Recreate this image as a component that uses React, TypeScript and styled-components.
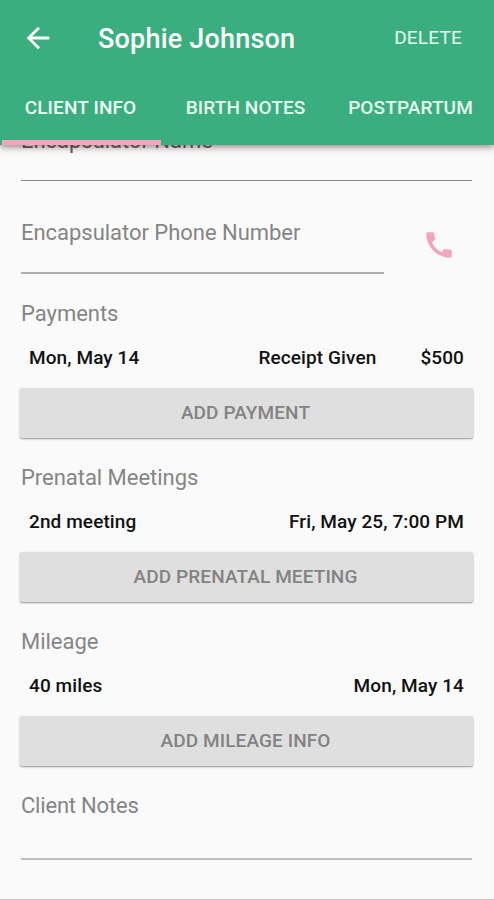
import React from "react";
import styled, { createGlobalStyle } from "styled-components";
import { MdArrowBack, MdCall } from "react-icons/md";

const GlobalStyle = createGlobalStyle`
  * { box-sizing: border-box; }
  body {
    margin: 0;
    background: #fafafa;
    font-family: Roboto, "Noto Sans", sans-serif;
  }
`;

const Screen = styled.div`
  display: flex;
  flex-direction: column;
  width: 494px;
  height: 900px;
  overflow: hidden;
  background: #fafafa;
  border-bottom: 1px solid #c4c4c4;
`;

const Header = styled.header`
  position: relative;
  z-index: 1;
  flex: none;
  height: 145px;
  background: #3aae7f;
  color: #fff;
  box-shadow: 0 2px 7px rgba(60, 30, 30, 0.55);
`;

const Toolbar = styled.div`
  display: flex;
  align-items: center;
  height: 76px;
  padding: 0 32px 0 21px;
`;

const BackButton = styled.button`
  display: flex;
  padding: 0 0 1px;
  margin-right: 43px;
  border: 0;
  background: none;
  color: inherit;
`;

const Title = styled.h1`
  flex: 1;
  margin: 0;
  padding-top: 2px;
  font-size: 27px;
  font-weight: 500;
  letter-spacing: 0.2px;
  white-space: nowrap;
`;

const DeleteButton = styled.button`
  padding: 0 0 2px;
  border: 0;
  background: none;
  color: #e6fbf1;
  font: 400 19px Roboto, sans-serif;
  letter-spacing: 0.2px;
`;

const Tabs = styled.nav`
  display: grid;
  grid-template-columns: 160px 171px 159px;
  height: 69px;
`;

const Tab = styled.button<{ $active?: boolean }>`
  padding: ${(p) => (p.$active ? "0 0 1px 1px" : "0 0 1px")};
  margin: ${(p) => (p.$active ? "0 -1px 0 2px" : "0")};
  border: 0;
  border-bottom: 5px solid ${(p) => (p.$active ? "#f5a6bd" : "transparent")};
  background: none;
  color: ${(p) => (p.$active ? "#f0fff8" : "#e6fbf1")};
  font: 500 19px Roboto, sans-serif;
  letter-spacing: 0.12px;
  text-indent: ${(p) => (p.$active ? "-3px" : "0")};
  white-space: nowrap;
`;

const Content = styled.main`
  display: flex;
  flex-direction: column;
  margin-top: -17px;
  padding: 0 22px 0 21px;
`;

const Label = styled.div<{ $dark?: boolean }>`
  height: 26px;
  font-size: 22px;
  line-height: 26px;
  letter-spacing: -0.03px;
  color: ${(p) => (p.$dark ? "#5c5c5c" : "#858585")};
`;

const Field = styled.div<{ $height: number; $line: string; $thick?: boolean }>`
  flex: 1;
  height: ${(p) => p.$height}px;
  border-bottom: ${(p) => (p.$thick ? 2 : 1)}px solid ${(p) => p.$line};
`;

const NameRow = styled.div`
  display: flex;
  margin-bottom: 39px;
`;

const PhoneRow = styled.div`
  display: flex;
  margin-bottom: 27px;
`;

const CallButton = styled.button`
  display: flex;
  width: 88px;
  padding: 8px 0 0 38px;
  border: 0;
  background: none;
  color: #f0a5bb;
`;

const Section = styled.section`
  display: flex;
  flex-direction: column;
  height: 164px;
`;

const Entry = styled.div`
  display: flex;
  margin: 20px 8px 19px;
  font-size: 19px;
  font-weight: 500;
  line-height: 22px;
  letter-spacing: 0.1px;
  color: #111;
`;

const Lead = styled.span`
  flex: 1;
`;

const Amount = styled.span`
  margin-left: 44px;
`;

const AddButton = styled.button`
  height: 50px;
  margin: 0 -1px;
  padding: 0 2px 2px 0;
  border: 0;
  border-radius: 2px;
  background: #dfdfdf;
  color: #838383;
  font: 500 19px Roboto, sans-serif;
  letter-spacing: 0.1px;
  box-shadow: 0 1px 2px rgba(0, 0, 0, 0.4);
`;

const NotesRow = styled.div`
  display: flex;
`;

const NotesLabel = styled(Label)`
  letter-spacing: -0.2px;
`;

export default function App() {
  return (
    <>
      <GlobalStyle />
      <Screen>
        <Header>
          <Toolbar>
            <BackButton aria-label="Back">
              <MdArrowBack size={34} />
            </BackButton>
            <Title>Sophie Johnson</Title>
            <DeleteButton>DELETE</DeleteButton>
          </Toolbar>
          <Tabs>
            <Tab $active>CLIENT INFO</Tab>
            <Tab>BIRTH NOTES</Tab>
            <Tab>POSTPARTUM</Tab>
          </Tabs>
        </Header>
        <Content>
          <NameRow>
            <Field $height={53} $line="#858585">
              <Label $dark>Encapsulator Name</Label>
            </Field>
          </NameRow>
          <PhoneRow>
            <Field $height={54} $line="#b0b0b0" $thick>
              <Label>Encapsulator Phone Number</Label>
            </Field>
            <CallButton aria-label="Call">
              <MdCall size={34} />
            </CallButton>
          </PhoneRow>
          <Section>
            <Label>Payments</Label>
            <Entry>
              <Lead>Mon, May 14</Lead>
              <span>Receipt Given</span>
              <Amount>$500</Amount>
            </Entry>
            <AddButton>ADD PAYMENT</AddButton>
          </Section>
          <Section>
            <Label>Prenatal Meetings</Label>
            <Entry>
              <Lead>2nd meeting</Lead>
              <span>Fri, May 25, 7:00 PM</span>
            </Entry>
            <AddButton>ADD PRENATAL MEETING</AddButton>
          </Section>
          <Section>
            <Label>Mileage</Label>
            <Entry>
              <Lead>40 miles</Lead>
              <span>Mon, May 14</span>
            </Entry>
            <AddButton>ADD MILEAGE INFO</AddButton>
          </Section>
          <NotesRow>
            <Field $height={67} $line="#bdbdbd" $thick>
              <NotesLabel>Client Notes</NotesLabel>
            </Field>
          </NotesRow>
        </Content>
      </Screen>
    </>
  );
}
